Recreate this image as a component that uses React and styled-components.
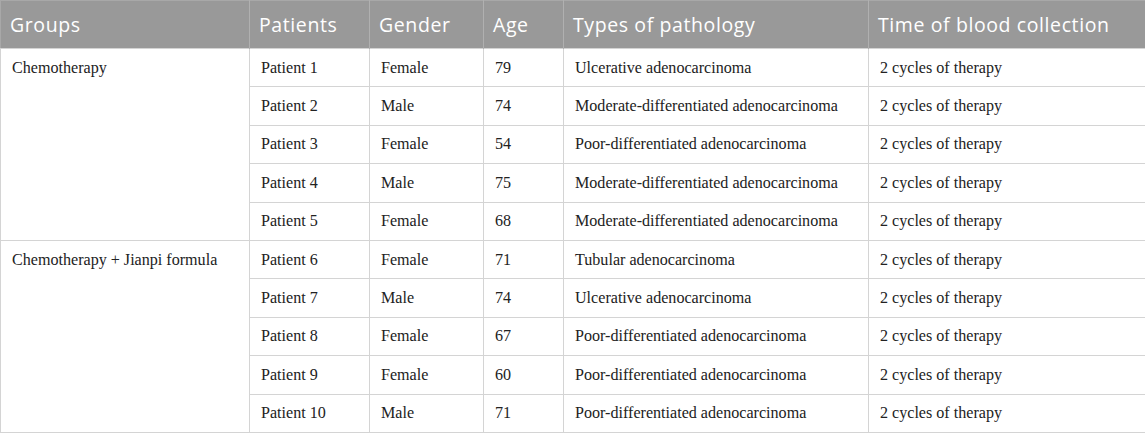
import React from "react";
import styled, { createGlobalStyle } from "styled-components";

const Global = createGlobalStyle`
  html, body { margin: 0; padding: 0; background: #fff; }
`;

const Table = styled.table`
  width: 1145px;
  border-collapse: collapse;
  table-layout: fixed;
  border: 1px solid #a8a8a8;
`;

const HeadCell = styled.th`
  background: #999999;
  color: #fff;
  font-family: "Open Sans", sans-serif;
  font-weight: 400;
  font-size: 19.5px;
  letter-spacing: 0.6px;
  text-align: left;
  padding: 0 9px;
  height: 48px;
  border-right: 1px solid #b0b0b0;
  box-sizing: border-box;
  white-space: nowrap;
`;

const Cell = styled.td`
  font-family: "Liberation Serif", "Times New Roman", serif;
  font-size: 16.1px;
  color: #222;
  padding: 0 10px 0 11px;
  height: 38.4px;
  border: 1px solid #d4d4d4;
  box-sizing: border-box;
  vertical-align: middle;
  white-space: nowrap;
`;

const GroupCell = styled(Cell)`
  vertical-align: top;
  padding-top: 10px;
`;

const columns = [
  { title: "Groups", width: 249 },
  { title: "Patients", width: 120 },
  { title: "Gender", width: 114 },
  { title: "Age", width: 80 },
  { title: "Types of pathology", width: 305 },
  { title: "Time of blood collection", width: 277 },
];

const groups = [
  {
    name: "Chemotherapy",
    rows: [
      ["Patient 1", "Female", "79", "Ulcerative adenocarcinoma"],
      ["Patient 2", "Male", "74", "Moderate-differentiated adenocarcinoma"],
      ["Patient 3", "Female", "54", "Poor-differentiated adenocarcinoma"],
      ["Patient 4", "Male", "75", "Moderate-differentiated adenocarcinoma"],
      ["Patient 5", "Female", "68", "Moderate-differentiated adenocarcinoma"],
    ],
  },
  {
    name: "Chemotherapy + Jianpi formula",
    rows: [
      ["Patient 6", "Female", "71", "Tubular adenocarcinoma"],
      ["Patient 7", "Male", "74", "Ulcerative adenocarcinoma"],
      ["Patient 8", "Female", "67", "Poor-differentiated adenocarcinoma"],
      ["Patient 9", "Female", "60", "Poor-differentiated adenocarcinoma"],
      ["Patient 10", "Male", "71", "Poor-differentiated adenocarcinoma"],
    ],
  },
];

export default function App() {
  return (
    <>
      <Global />
      <Table>
        <colgroup>
          {columns.map((c) => (
            <col key={c.title} style={{ width: c.width }} />
          ))}
        </colgroup>
        <thead>
          <tr>
            {columns.map((c) => (
              <HeadCell key={c.title}>{c.title}</HeadCell>
            ))}
          </tr>
        </thead>
        <tbody>
          {groups.map((g) =>
            g.rows.map((r, i) => (
              <tr key={r[0]}>
                {i === 0 && (
                  <GroupCell rowSpan={g.rows.length}>{g.name}</GroupCell>
                )}
                {r.map((v, j) => (
                  <Cell key={j}>{v}</Cell>
                ))}
                <Cell>2 cycles of therapy</Cell>
              </tr>
            ))
          )}
        </tbody>
      </Table>
    </>
  );
}
